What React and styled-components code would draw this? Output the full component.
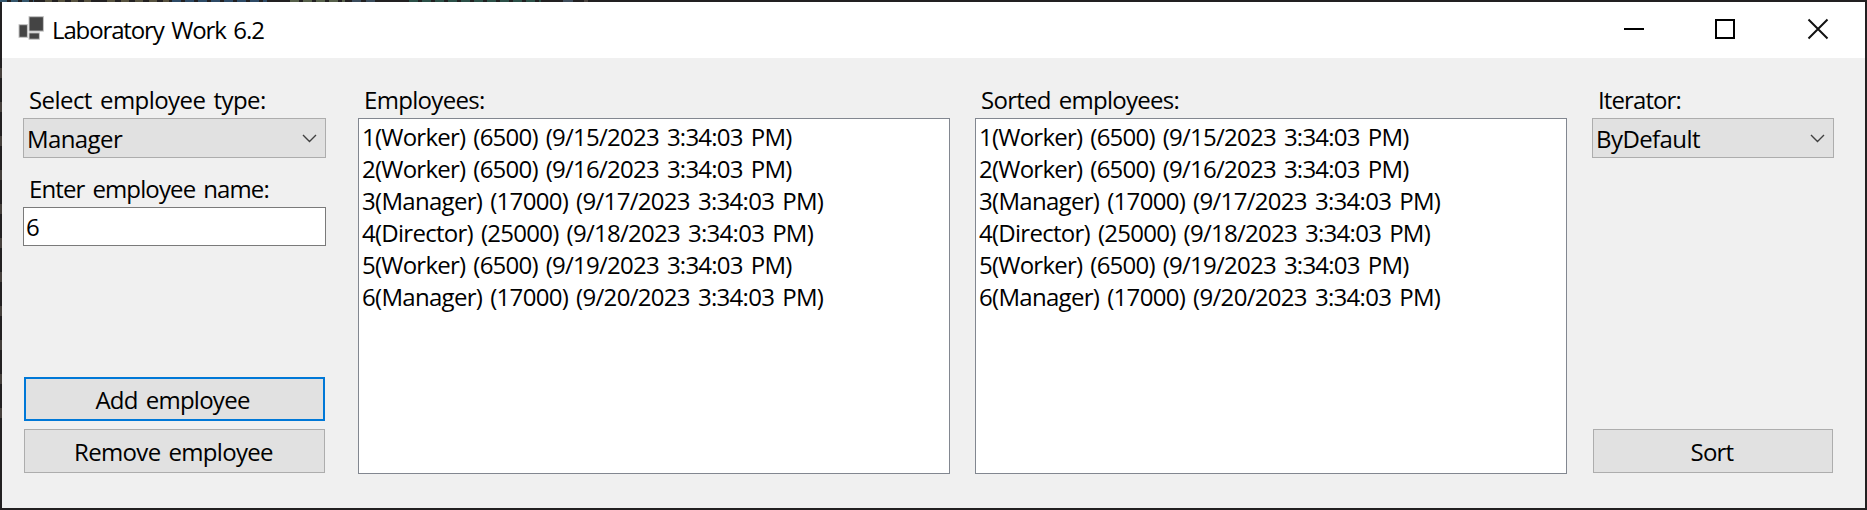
import React from "react";
import styled, { createGlobalStyle } from "styled-components";

const GlobalStyle = createGlobalStyle`
  * { box-sizing: border-box; }
  body { margin: 0; overflow: hidden; background: #222021; }
`;

/* Dark desktop edge with slivers of the code editor behind the window. */
const Desktop = styled.div`
  width: 1867px;
  height: 510px;
  padding: 2px;
  background:
    repeating-linear-gradient(90deg, #34566c 0 7px, #222021 7px 11px) 0 0 / 34px 2px no-repeat,
    repeating-linear-gradient(90deg, #57523f 0 7px, #222021 7px 13px) 45px 0 / 52px 2px no-repeat,
    repeating-linear-gradient(90deg, #57523f 0 8px, #222021 8px 14px) 107px 0 / 62px 2px no-repeat,
    repeating-linear-gradient(90deg, #2d4a66 0 9px, #222021 9px 13px) 172px 0 / 95px 2px no-repeat,
    repeating-linear-gradient(90deg, #56604a 0 9px, #222021 9px 13px) 290px 0 / 55px 2px no-repeat,
    repeating-linear-gradient(90deg, #3a4c5c 0 9px, #222021 9px 14px) 352px 0 / 24px 2px no-repeat,
    repeating-linear-gradient(90deg, #2b5048 0 9px, #222021 9px 13px) 409px 0 / 132px 2px no-repeat,
    linear-gradient(#3f4e5c, #3f4e5c) 563px 0 / 10px 2px no-repeat,
    linear-gradient(#4a4440, #4a4440) 584px 0 / 4px 2px no-repeat,
    repeating-linear-gradient(#222021 0 24px, #45403c 24px 34px) 0 44px / 2px 380px no-repeat,
    #222021;
  font-family: "Open Sans", "Noto Sans", sans-serif;
  font-size: 24px;
  line-height: 32px;
  word-spacing: 2.5px;
  color: #000;
`;

const Window = styled.div`
  display: flex;
  flex-direction: column;
  height: 100%;
  background: #f0f0f0;
`;

const TitleBar = styled.header`
  display: flex;
  align-items: flex-start;
  flex: none;
  height: 56px;
  background: #fff;
`;

const AppIcon = styled.svg`
  display: block;
  margin: 14px 7px 0 16px;
`;

const Text = styled.span`
  display: block;
  white-space: nowrap;
  letter-spacing: ${(p) => p.$tracking}px;
`;

const Title = styled(Text)`
  flex: 1;
  margin-top: 12px;
`;

const WindowControls = styled.svg`
  display: block;
  margin-top: 16px;
  margin-right: 36px;
`;

const Form = styled.main`
  display: flex;
  flex: 1;
  padding: 26px 31px 34px 21px;
`;

const Column = styled.section`
  display: flex;
  flex-direction: column;
  width: ${(p) => p.$width}px;
  margin-right: ${(p) => p.$gap || 0}px;
`;

const Label = styled(Text)`
  flex: none;
  padding-left: 6px;
  margin-bottom: 2px;
`;

const Select = styled.div`
  display: flex;
  align-items: center;
  justify-content: space-between;
  flex: none;
  height: 40px;
  margin-bottom: 15px;
  padding: 2px 8px 0 3px;
  border: 1px solid #adadad;
  background: #e1e1e1;
`;

const TextBox = styled.div`
  display: flex;
  align-items: center;
  flex: none;
  height: 39px;
  padding: 1px 0 0 2px;
  border: 1px solid #7a7a7a;
  background: #fff;
`;

const Actions = styled.div`
  display: flex;
  flex-direction: column;
  gap: 8px;
  margin: auto 1px 1px;
`;

const Button = styled.div`
  display: flex;
  align-items: center;
  justify-content: center;
  height: 44px;
  padding: 2px ${(p) => p.$shift}px 0 0;
  border: ${(p) => (p.$focused ? "2px solid #0078d7" : "1px solid #adadad")};
  background: #e1e1e1;
`;

const ListBox = styled.div`
  flex: 1;
  padding: 2px 0 0 3px;
  border: 1px solid #828790;
  background: #fff;
`;

const employees = [
  { text: "1(Worker) (6500) (9/15/2023 3:34:03 PM)", tracking: -0.76 },
  { text: "2(Worker) (6500) (9/16/2023 3:34:03 PM)", tracking: -0.76 },
  { text: "3(Manager) (17000) (9/17/2023 3:34:03 PM)", tracking: -0.7 },
  { text: "4(Director) (25000) (9/18/2023 3:34:03 PM)", tracking: -0.73 },
  { text: "5(Worker) (6500) (9/19/2023 3:34:03 PM)", tracking: -0.76 },
  { text: "6(Manager) (17000) (9/20/2023 3:34:03 PM)", tracking: -0.7 },
];

const EmployeeList = () => (
  <ListBox>
    {employees.map((e) => (
      <Text key={e.text} $tracking={e.tracking}>{e.text}</Text>
    ))}
  </ListBox>
);

const Chevron = () => (
  <svg width="15" height="10" viewBox="0 0 15 10">
    <path d="M1 1 L7.5 7.5 L14 1" fill="none" stroke="#404040" strokeWidth="1.4" />
  </svg>
);

export default function App() {
  return (
    <Desktop>
      <GlobalStyle />
      <Window>
        <TitleBar>
          <AppIcon width="27" height="25" viewBox="0 0 27 25">
            <g fill="#444" stroke="#c4c4c4" strokeWidth="1">
              <rect x="11" y="0.7" width="14.4" height="14.4" />
              <rect x="1" y="8.7" width="8.4" height="12.6" />
              <rect x="11" y="16.9" width="10.4" height="6.3" />
            </g>
          </AppIcon>
          <Title $tracking={-1.13}>Laboratory Work 6.2</Title>
          <WindowControls width="205" height="22" viewBox="0 0 205 22">
            <path d="M0 11 H20" stroke="#000" strokeWidth="2" />
            <rect x="92" y="2" width="18" height="18" fill="none" stroke="#000" strokeWidth="2" />
            <path d="M184.5 1.5 L203.5 20.5 M203.5 1.5 L184.5 20.5" stroke="#111" strokeWidth="2" />
          </WindowControls>
        </TitleBar>
        <Form>
          <Column $width={303} $gap={32}>
            <Label $tracking={-0.565}>Select employee type:</Label>
            <Select>
              <Text $tracking={-0.6}>Manager</Text>
              <Chevron />
            </Select>
            <Label $tracking={-0.87}>Enter employee name:</Label>
            <TextBox>
              <Text $tracking={0}>6</Text>
            </TextBox>
            <Actions>
              <Button $focused $shift={4}><Text $tracking={-0.74}>Add employee</Text></Button>
              <Button $shift={2}><Text $tracking={-0.68}>Remove employee</Text></Button>
            </Actions>
          </Column>
          <Column $width={592} $gap={25}>
            <Label $tracking={-0.683}>Employees:</Label>
            <EmployeeList />
          </Column>
          <Column $width={592} $gap={25}>
            <Label $tracking={-0.73}>Sorted employees:</Label>
            <EmployeeList />
          </Column>
          <Column $width={242}>
            <Label $tracking={-0.897}>Iterator:</Label>
            <Select>
              <Text $tracking={-0.576}>ByDefault</Text>
              <Chevron />
            </Select>
            <Actions>
              <Button $shift={2}><Text $tracking={-0.802}>Sort</Text></Button>
            </Actions>
          </Column>
        </Form>
      </Window>
    </Desktop>
  );
}
